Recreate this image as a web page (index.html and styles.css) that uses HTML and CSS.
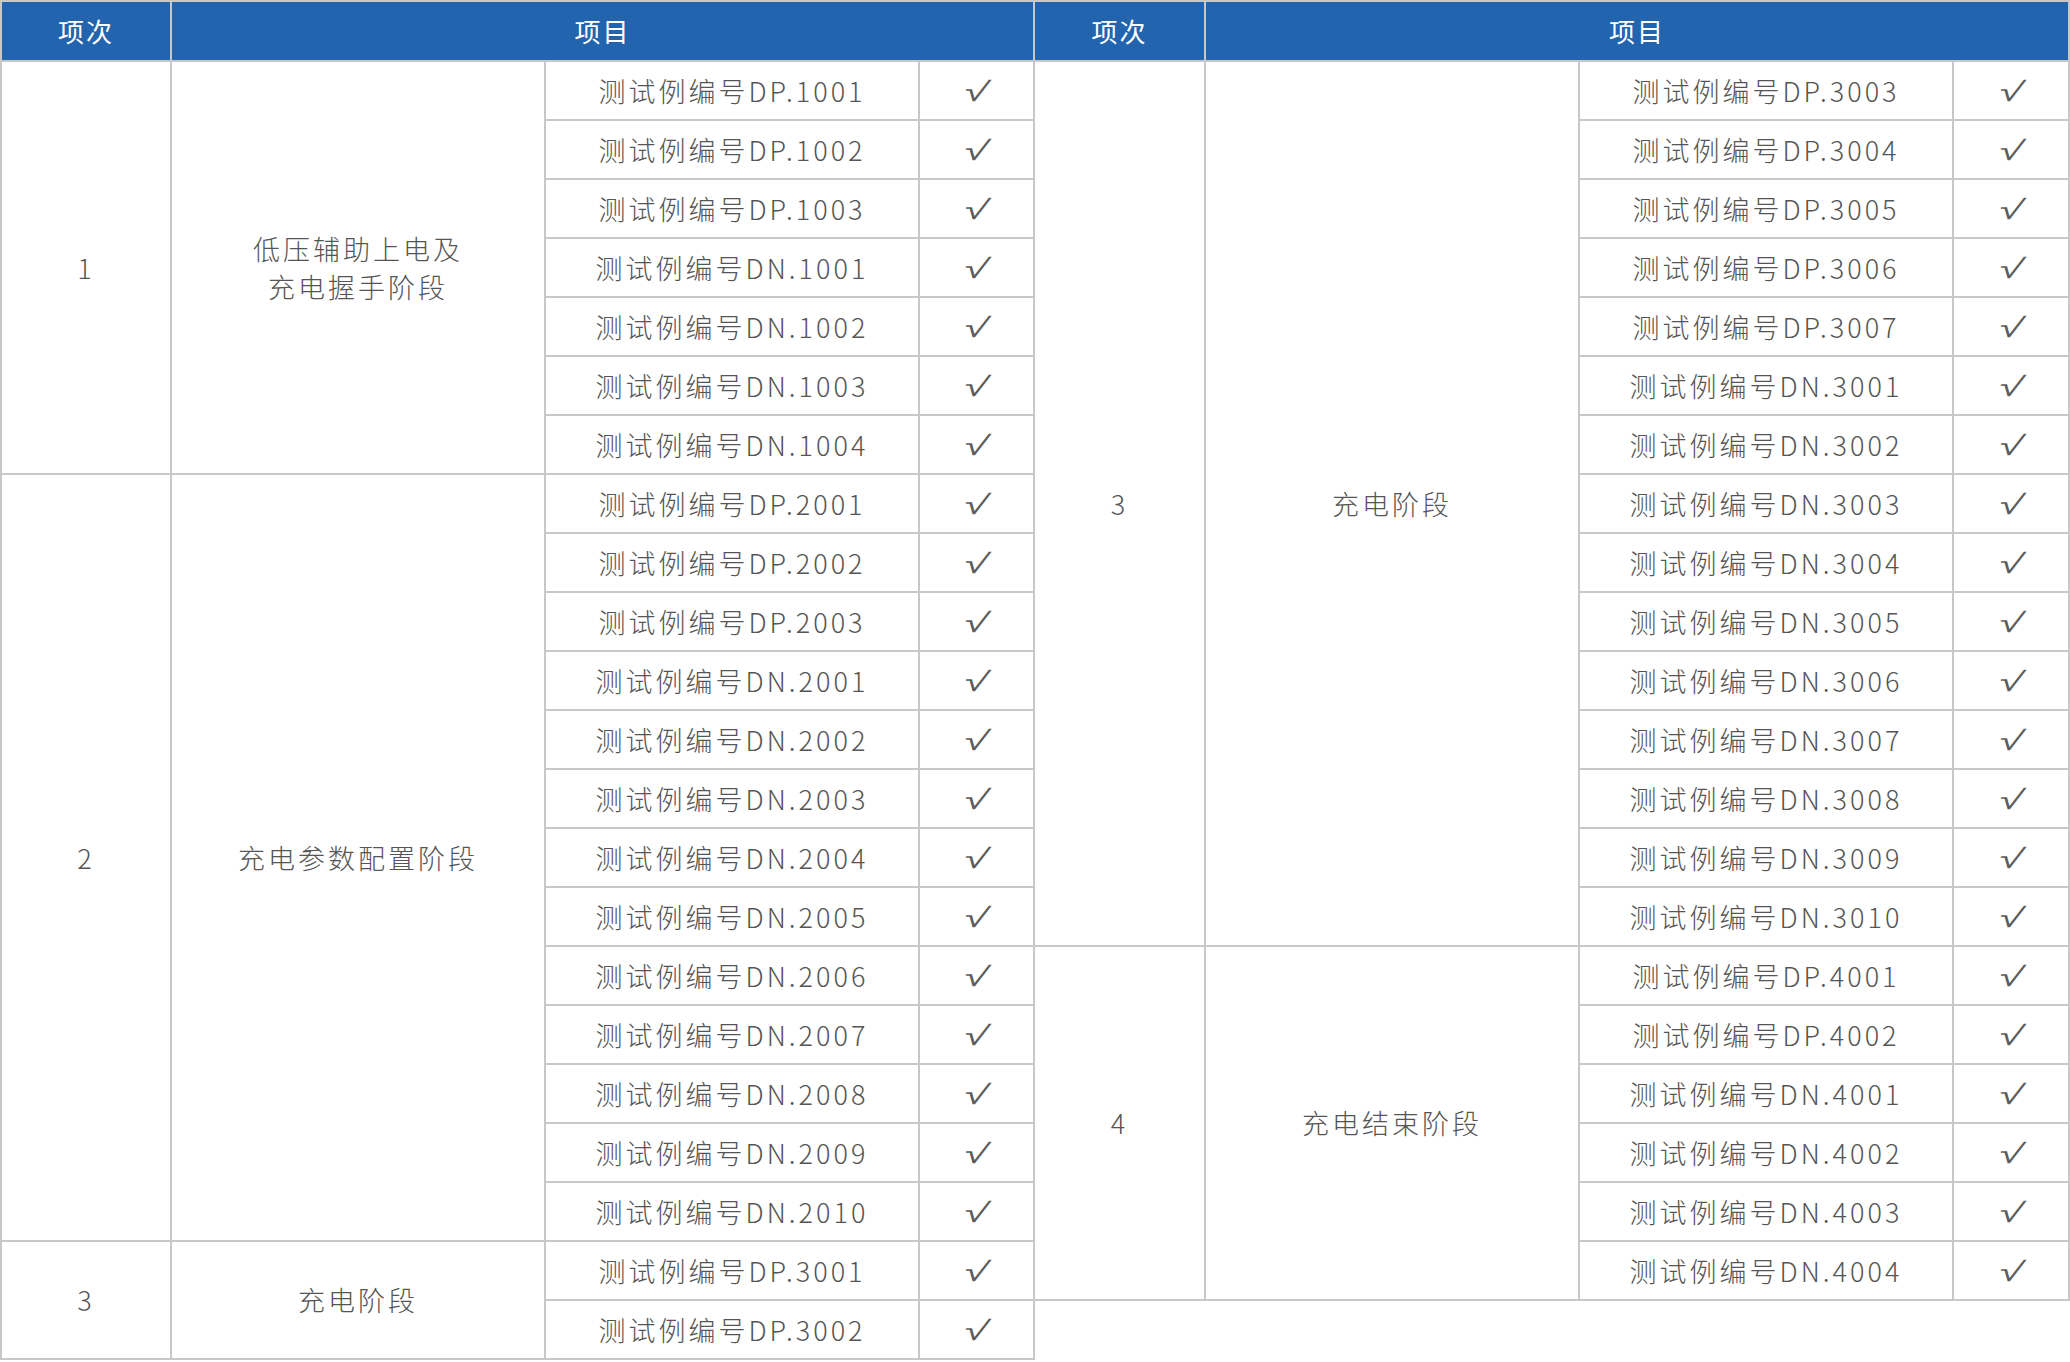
FILE: index.html
```html
<!DOCTYPE html>
<html lang="zh-CN">
<head>
<meta charset="utf-8">
<title>测试项目表</title>
<link rel="stylesheet" href="styles.css">
</head>
<body>
<div class="page">
  <div class="grid grid-left">
    <div class="hd">项次</div>
    <div class="hd span3">项目</div>

    <div class="c num r7">1</div>
    <div class="c name r7">低压辅助上电及<br>充电握手阶段</div>
    <div class="c code">测试例编号DP.1001</div><div class="c chk"><span>√</span></div>
    <div class="c code">测试例编号DP.1002</div><div class="c chk"><span>√</span></div>
    <div class="c code">测试例编号DP.1003</div><div class="c chk"><span>√</span></div>
    <div class="c code">测试例编号DN.1001</div><div class="c chk"><span>√</span></div>
    <div class="c code">测试例编号DN.1002</div><div class="c chk"><span>√</span></div>
    <div class="c code">测试例编号DN.1003</div><div class="c chk"><span>√</span></div>
    <div class="c code">测试例编号DN.1004</div><div class="c chk"><span>√</span></div>

    <div class="c num r13">2</div>
    <div class="c name r13">充电参数配置阶段</div>
    <div class="c code">测试例编号DP.2001</div><div class="c chk"><span>√</span></div>
    <div class="c code">测试例编号DP.2002</div><div class="c chk"><span>√</span></div>
    <div class="c code">测试例编号DP.2003</div><div class="c chk"><span>√</span></div>
    <div class="c code">测试例编号DN.2001</div><div class="c chk"><span>√</span></div>
    <div class="c code">测试例编号DN.2002</div><div class="c chk"><span>√</span></div>
    <div class="c code">测试例编号DN.2003</div><div class="c chk"><span>√</span></div>
    <div class="c code">测试例编号DN.2004</div><div class="c chk"><span>√</span></div>
    <div class="c code">测试例编号DN.2005</div><div class="c chk"><span>√</span></div>
    <div class="c code">测试例编号DN.2006</div><div class="c chk"><span>√</span></div>
    <div class="c code">测试例编号DN.2007</div><div class="c chk"><span>√</span></div>
    <div class="c code">测试例编号DN.2008</div><div class="c chk"><span>√</span></div>
    <div class="c code">测试例编号DN.2009</div><div class="c chk"><span>√</span></div>
    <div class="c code">测试例编号DN.2010</div><div class="c chk"><span>√</span></div>

    <div class="c num r2">3</div>
    <div class="c name r2">充电阶段</div>
    <div class="c code">测试例编号DP.3001</div><div class="c chk"><span>√</span></div>
    <div class="c code">测试例编号DP.3002</div><div class="c chk"><span>√</span></div>
  </div>

  <div class="grid grid-right">
    <div class="hd">项次</div>
    <div class="hd span3">项目</div>

    <div class="c num r15">3</div>
    <div class="c name r15">充电阶段</div>
    <div class="c code">测试例编号DP.3003</div><div class="c chk"><span>√</span></div>
    <div class="c code">测试例编号DP.3004</div><div class="c chk"><span>√</span></div>
    <div class="c code">测试例编号DP.3005</div><div class="c chk"><span>√</span></div>
    <div class="c code">测试例编号DP.3006</div><div class="c chk"><span>√</span></div>
    <div class="c code">测试例编号DP.3007</div><div class="c chk"><span>√</span></div>
    <div class="c code">测试例编号DN.3001</div><div class="c chk"><span>√</span></div>
    <div class="c code">测试例编号DN.3002</div><div class="c chk"><span>√</span></div>
    <div class="c code">测试例编号DN.3003</div><div class="c chk"><span>√</span></div>
    <div class="c code">测试例编号DN.3004</div><div class="c chk"><span>√</span></div>
    <div class="c code">测试例编号DN.3005</div><div class="c chk"><span>√</span></div>
    <div class="c code">测试例编号DN.3006</div><div class="c chk"><span>√</span></div>
    <div class="c code">测试例编号DN.3007</div><div class="c chk"><span>√</span></div>
    <div class="c code">测试例编号DN.3008</div><div class="c chk"><span>√</span></div>
    <div class="c code">测试例编号DN.3009</div><div class="c chk"><span>√</span></div>
    <div class="c code">测试例编号DN.3010</div><div class="c chk"><span>√</span></div>

    <div class="c num r6">4</div>
    <div class="c name r6">充电结束阶段</div>
    <div class="c code">测试例编号DP.4001</div><div class="c chk"><span>√</span></div>
    <div class="c code">测试例编号DP.4002</div><div class="c chk"><span>√</span></div>
    <div class="c code">测试例编号DN.4001</div><div class="c chk"><span>√</span></div>
    <div class="c code">测试例编号DN.4002</div><div class="c chk"><span>√</span></div>
    <div class="c code">测试例编号DN.4003</div><div class="c chk"><span>√</span></div>
    <div class="c code">测试例编号DN.4004</div><div class="c chk"><span>√</span></div>
  </div>
</div>
</body>
</html>
```

FILE: styles.css
```css
html, body {
  margin: 0;
  padding: 0;
  background: #ffffff;
}

.page {
  display: flex;
  align-items: flex-start;
  width: 2070px;
  font-family: "Noto Sans CJK SC", "Noto Sans", sans-serif;
}

.grid {
  display: grid;
  grid-auto-rows: 59px;
  grid-template-rows: 60px;
  border-top: 2px solid #c8c8c8;
  box-sizing: border-box;
}

.grid-left {
  grid-template-columns: 170px 374px 374px 115px;
  border-left: 2px solid #c8c8c8;
  width: 1035px;
}

.grid-right {
  grid-template-columns: 171px 374px 374px 116px;
  width: 1035px;
}

.hd,
.c {
  box-sizing: border-box;
  border-right: 2px solid #c8c8c8;
  border-bottom: 2px solid #c8c8c8;
  display: flex;
  align-items: center;
  justify-content: center;
  text-align: center;
}

.hd {
  background: #2364ae;
  color: #ffffff;
  font-size: 26px;
  font-weight: 400;
  letter-spacing: 2px;
  padding-bottom: 2px;
}

.span3 {
  grid-column: span 3;
}

.c {
  color: #555555;
  font-size: 27px;
  font-weight: 300;
  letter-spacing: 3px;
  line-height: 38px;
}

.chk {
  color: #5c5c5c;
  letter-spacing: 0;
  padding-top: 2px;
}

.chk span {
  display: inline-block;
  font-family: "DejaVu Sans", sans-serif;
  font-size: 27px;
  font-weight: 200;
  line-height: 1;
  transform: skewX(-16deg) scaleX(1.6);
}

.r2 { grid-row: span 2; }
.r6 { grid-row: span 6; }
.r7 { grid-row: span 7; }
.r13 { grid-row: span 13; }
.r15 { grid-row: span 15; }
```
